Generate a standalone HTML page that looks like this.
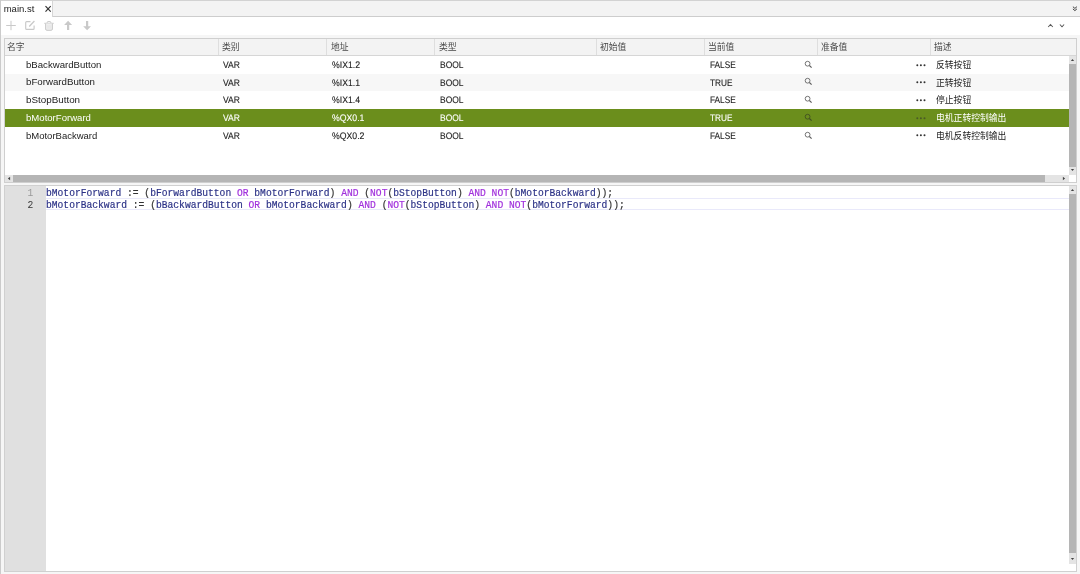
<!DOCTYPE html><html lang="zh"><head><meta charset="utf-8"><title>main.st</title><style>
*{box-sizing:border-box;margin:0;padding:0}
html,body{width:1080px;height:574px;overflow:hidden;background:#f6f6f6;}
body{position:relative;font-family:"Liberation Sans","Noto Sans CJK SC",sans-serif;color:#222;font-size:9.5px;}
#root{position:absolute;left:0;top:0;width:1080px;height:574px;will-change:transform;}
.abs{position:absolute}
.zh{font-size:8.8px;}
.t{position:absolute;white-space:nowrap;line-height:12px;height:12px;transform-origin:0 50%;}
#tabbar{left:0;top:0;width:1080px;height:17px;background:#f3f3f3;border-top:1px solid #d2d2d2;border-bottom:1px solid #cdcdcd;}
#tab{left:1px;top:1px;width:52px;height:16px;background:#fff;border-right:1px solid #d6d6d6;}
#leftedge{left:0;top:0;width:1px;height:574px;background:#cbcbcb;}
#toolbar{left:1px;top:17px;width:1079px;height:17.5px;background:#fff;}
#tablebox{left:4px;top:38px;width:1073px;height:145px;background:#fff;border:1px solid #cfcfcf;}
#thead{left:5px;top:39px;width:1071px;height:17px;background:#f3f3f3;border-bottom:1px solid #d6d6d6;}
.sep{position:absolute;top:39px;width:1px;height:16px;background:#dedede;}
.row{position:absolute;left:5px;width:1064px;}
.alt{background:#f7f7f7}
.sel{background:#6b8e1c;}
.sel .t{color:#fff}
.sb{background:#e4e4e4}
.th{background:#b5b5b5}
#editor{left:4px;top:185px;width:1073px;height:387px;background:#fff;border:1px solid #d0d0d0;}
#gutter{left:5px;top:186px;width:41px;height:385px;background:#e0e0e0;}
.code{position:absolute;left:45.5px;white-space:pre;font-family:"Liberation Mono",monospace;font-size:11px;line-height:12px;height:12px;color:#333;transform:scaleX(0.8765);transform-origin:0 50%;-webkit-text-stroke:0.2px currentColor;}
.id{color:#2c3287}
.kw{color:#a030dc}
.ln{position:absolute;width:33.2px;left:0;text-align:right;font-family:"Liberation Mono",monospace;font-size:11px;line-height:12px;transform:scaleX(0.8765);transform-origin:100% 50%;}
</style></head><body><div id="root">
<div class="abs" id="toolbar"></div>
<div class="abs" id="tabbar"></div>
<div class="abs" id="tab"></div>
<div class="abs" id="leftedge"></div>
<div class="t" style="left:3.7px;top:3px;font-size:9.5px;color:#222">main.st</div>
<svg class="abs" style="left:44px;top:4px" width="8" height="10" viewBox="0 0 8 10"><path d="M1.5 2.1 L6.7 7.7 M6.7 2.1 L1.5 7.7" stroke="#333" stroke-width="1.15" fill="none"/></svg>
<svg class="abs" style="left:1072px;top:6px" width="6" height="6" viewBox="0 0 6 6"><path d="M0.9 0.7 L2.9 2.4 L4.9 0.7 M0.9 2.9 L2.9 4.6 L4.9 2.9" stroke="#333" stroke-width="0.95" fill="none"/></svg>
<svg class="abs" style="left:0;top:17px" width="100" height="17" viewBox="0 17 100 17"><path d="M11 20.8 V30.2 M6.2 25.5 H15.8" stroke="#c9c9c9" stroke-width="1" fill="none"/><path d="M30.5 21.6 H26.7 Q25.7 21.6 25.7 22.6 V28.4 Q25.7 29.4 26.7 29.4 H33.1 Q34.1 29.4 34.1 28.4 V25.6" stroke="#c9c9c9" stroke-width="1.15" fill="none"/><path d="M29.2 26.5 L34.4 21" stroke="#c9c9c9" stroke-width="1.25" fill="none"/><path d="M44.3 23.3 H53.7 M47.2 23 V22.4 Q47.2 21.6 48 21.6 H50 Q50.8 21.6 50.8 22.4 V23" stroke="#c9c9c9" stroke-width="1" fill="none"/><path d="M45.6 23.6 V29 Q45.6 30.3 46.9 30.3 H51.1 Q52.4 30.3 52.4 29 V23.6" stroke="#c9c9c9" stroke-width="1" fill="#eeeeee"/><path d="M48 25.3 V28.6 M50 25.3 V28.6" stroke="#e0e0e0" stroke-width="0.8" fill="none"/><path d="M68.1 20.8 L72.1 25 H69.2 V30 H67 V25 H64.1 Z" fill="#c9c9c9"/><path d="M87.1 30.3 L91 26.2 H88.2 V21 H86 V26.2 H83.2 Z" fill="#c9c9c9"/></svg>
<svg class="abs" style="left:1047px;top:23px" width="20" height="6" viewBox="0 0 20 6"><path d="M1.2 4 L3.5 1.5 L5.8 4 M12.9 1.5 L15 3.8 L17.1 1.5" stroke="#5a5a5a" stroke-width="1.05" fill="none"/></svg>
<div class="abs" id="tablebox"></div><div class="abs" id="thead"></div>
<div class="sep" style="left:218px"></div>
<div class="sep" style="left:326px"></div>
<div class="sep" style="left:434px"></div>
<div class="sep" style="left:596px"></div>
<div class="sep" style="left:704px"></div>
<div class="sep" style="left:817px"></div>
<div class="sep" style="left:930px"></div>
<div class="t zh" style="left:7px;top:41px;color:#484848">名字</div>
<div class="t zh" style="left:222px;top:41px;color:#484848">类别</div>
<div class="t zh" style="left:331px;top:41px;color:#484848">地址</div>
<div class="t zh" style="left:439px;top:41px;color:#484848">类型</div>
<div class="t zh" style="left:600px;top:41px;color:#484848">初始值</div>
<div class="t zh" style="left:708px;top:41px;color:#484848">当前值</div>
<div class="t zh" style="left:821px;top:41px;color:#484848">准备值</div>
<div class="t zh" style="left:934px;top:41px;color:#484848">描述</div>
<div class="row" style="top:56px;height:18px">
<span class="t" style="left:21px;top:3.0px;transform:scaleX(1.012)">bBackwardButton</span>
<span class="t" style="left:218px;top:3.1px;-webkit-text-stroke:0.12px currentColor;transform:scale(0.900,1.0) rotate(0.03deg)">VAR</span>
<span class="t" style="left:326.5px;top:3.1px;-webkit-text-stroke:0.12px currentColor;transform:scale(0.917,1.0) rotate(0.03deg)">%IX1.2</span>
<span class="t" style="left:435px;top:3.1px;-webkit-text-stroke:0.12px currentColor;transform:scale(0.890,1.0) rotate(0.03deg)">BOOL</span>
<span class="t" style="left:704.5px;top:3.1px;-webkit-text-stroke:0.12px currentColor;transform:scale(0.870,1.0) rotate(0.03deg)">FALSE</span>
<span class="t zh" style="left:931px;top:3.1px">反转按钮</span>
<svg class="abs" style="left:798.5px;top:4.0px" width="9" height="9" viewBox="0 0 9 9"><circle cx="3.6" cy="3.7" r="2.4" stroke="#5c5c5c" stroke-width="0.85" fill="none"/><path d="M5.4 5.5 L7.6 7.7" stroke="#5c5c5c" stroke-width="1.1"/></svg>
<svg class="abs" style="left:911.3px;top:7.6px" width="11" height="3" viewBox="0 0 11 3"><circle cx="1.3" cy="1.3" r="1" fill="#333"/><circle cx="4.9" cy="1.3" r="1" fill="#333"/><circle cx="8.5" cy="1.3" r="1" fill="#333"/></svg>
</div>
<div class="row alt" style="top:73.6px;height:17.1px">
<span class="t" style="left:21px;top:2.7px;transform:scaleX(1.021)">bForwardButton</span>
<span class="t" style="left:218px;top:3.4px;-webkit-text-stroke:0.12px currentColor;transform:scale(0.900,1.0) rotate(0.03deg)">VAR</span>
<span class="t" style="left:326.5px;top:3.4px;-webkit-text-stroke:0.12px currentColor;transform:scale(0.917,1.0) rotate(0.03deg)">%IX1.1</span>
<span class="t" style="left:435px;top:3.4px;-webkit-text-stroke:0.12px currentColor;transform:scale(0.890,1.0) rotate(0.03deg)">BOOL</span>
<span class="t" style="left:704.5px;top:3.4px;-webkit-text-stroke:0.12px currentColor;transform:scale(0.870,1.0) rotate(0.03deg)">TRUE</span>
<span class="t zh" style="left:931px;top:3.4px">正转按钮</span>
<svg class="abs" style="left:798.5px;top:3.7px" width="9" height="9" viewBox="0 0 9 9"><circle cx="3.6" cy="3.7" r="2.4" stroke="#5c5c5c" stroke-width="0.85" fill="none"/><path d="M5.4 5.5 L7.6 7.7" stroke="#5c5c5c" stroke-width="1.1"/></svg>
<svg class="abs" style="left:911.3px;top:7.3px" width="11" height="3" viewBox="0 0 11 3"><circle cx="1.3" cy="1.3" r="1" fill="#333"/><circle cx="4.9" cy="1.3" r="1" fill="#333"/><circle cx="8.5" cy="1.3" r="1" fill="#333"/></svg>
</div>
<div class="row" style="top:91px;height:18px">
<span class="t" style="left:21px;top:3.2px;transform:scaleX(1.034)">bStopButton</span>
<span class="t" style="left:218px;top:3.3px;-webkit-text-stroke:0.12px currentColor;transform:scale(0.900,1.0) rotate(0.03deg)">VAR</span>
<span class="t" style="left:326.5px;top:3.3px;-webkit-text-stroke:0.12px currentColor;transform:scale(0.917,1.0) rotate(0.03deg)">%IX1.4</span>
<span class="t" style="left:435px;top:3.3px;-webkit-text-stroke:0.12px currentColor;transform:scale(0.890,1.0) rotate(0.03deg)">BOOL</span>
<span class="t" style="left:704.5px;top:3.3px;-webkit-text-stroke:0.12px currentColor;transform:scale(0.870,1.0) rotate(0.03deg)">FALSE</span>
<span class="t zh" style="left:931px;top:3.3px">停止按钮</span>
<svg class="abs" style="left:798.5px;top:4.2px" width="9" height="9" viewBox="0 0 9 9"><circle cx="3.6" cy="3.7" r="2.4" stroke="#5c5c5c" stroke-width="0.85" fill="none"/><path d="M5.4 5.5 L7.6 7.7" stroke="#5c5c5c" stroke-width="1.1"/></svg>
<svg class="abs" style="left:911.3px;top:7.8px" width="11" height="3" viewBox="0 0 11 3"><circle cx="1.3" cy="1.3" r="1" fill="#333"/><circle cx="4.9" cy="1.3" r="1" fill="#333"/><circle cx="8.5" cy="1.3" r="1" fill="#333"/></svg>
</div>
<div class="row sel" style="top:109px;height:17.5px">
<span class="t" style="left:21px;top:3.0px;transform:scaleX(1.008)">bMotorForward</span>
<span class="t" style="left:218px;top:3.1px;-webkit-text-stroke:0.12px currentColor;transform:scale(0.900,1.0) rotate(0.03deg)">VAR</span>
<span class="t" style="left:326.5px;top:3.1px;-webkit-text-stroke:0.12px currentColor;transform:scale(0.917,1.0) rotate(0.03deg)">%QX0.1</span>
<span class="t" style="left:435px;top:3.1px;-webkit-text-stroke:0.12px currentColor;transform:scale(0.890,1.0) rotate(0.03deg)">BOOL</span>
<span class="t" style="left:704.5px;top:3.1px;-webkit-text-stroke:0.12px currentColor;transform:scale(0.870,1.0) rotate(0.03deg)">TRUE</span>
<span class="t zh" style="left:931px;top:3.1px">电机正转控制输出</span>
<svg class="abs" style="left:798.5px;top:4.0px" width="9" height="9" viewBox="0 0 9 9"><circle cx="3.6" cy="3.7" r="2.4" stroke="#3f4d22" stroke-width="0.85" fill="none"/><path d="M5.4 5.5 L7.6 7.7" stroke="#3f4d22" stroke-width="1.1"/></svg>
<svg class="abs" style="left:911.3px;top:7.6px" width="11" height="3" viewBox="0 0 11 3"><circle cx="1.3" cy="1.3" r="1" fill="#4a5a28"/><circle cx="4.9" cy="1.3" r="1" fill="#4a5a28"/><circle cx="8.5" cy="1.3" r="1" fill="#4a5a28"/></svg>
</div>
<div class="row" style="top:127px;height:17.5px">
<span class="t" style="left:21px;top:2.7px">bMotorBackward</span>
<span class="t" style="left:218px;top:2.8px;-webkit-text-stroke:0.12px currentColor;transform:scale(0.900,1.0) rotate(0.03deg)">VAR</span>
<span class="t" style="left:326.5px;top:2.8px;-webkit-text-stroke:0.12px currentColor;transform:scale(0.917,1.0) rotate(0.03deg)">%QX0.2</span>
<span class="t" style="left:435px;top:2.8px;-webkit-text-stroke:0.12px currentColor;transform:scale(0.890,1.0) rotate(0.03deg)">BOOL</span>
<span class="t" style="left:704.5px;top:2.8px;-webkit-text-stroke:0.12px currentColor;transform:scale(0.870,1.0) rotate(0.03deg)">FALSE</span>
<span class="t zh" style="left:931px;top:2.8px">电机反转控制输出</span>
<svg class="abs" style="left:798.5px;top:3.7px" width="9" height="9" viewBox="0 0 9 9"><circle cx="3.6" cy="3.7" r="2.4" stroke="#5c5c5c" stroke-width="0.85" fill="none"/><path d="M5.4 5.5 L7.6 7.7" stroke="#5c5c5c" stroke-width="1.1"/></svg>
<svg class="abs" style="left:911.3px;top:7.3px" width="11" height="3" viewBox="0 0 11 3"><circle cx="1.3" cy="1.3" r="1" fill="#333"/><circle cx="4.9" cy="1.3" r="1" fill="#333"/><circle cx="8.5" cy="1.3" r="1" fill="#333"/></svg>
</div>
<div class="abs sb" style="left:1069px;top:56px;width:7px;height:119px"></div><div class="abs th" style="left:1069px;top:64px;width:7px;height:102.5px"></div>
<svg class="abs" style="left:1069.8px;top:57.6px" width="5" height="4" viewBox="0 0 5 4"><path d="M0.9 2.9 L2.5 1.1 L4.1 2.9Z" fill="#444"/></svg>
<svg class="abs" style="left:1069.8px;top:167.9px" width="5" height="4" viewBox="0 0 5 4"><path d="M0.9 1.1 L2.5 2.9 L4.1 1.1Z" fill="#444"/></svg>
<div class="abs sb" style="left:5px;top:175px;width:1063.5px;height:7.3px"></div><div class="abs th" style="left:12.5px;top:175px;width:1032px;height:7.3px"></div>
<svg class="abs" style="left:6.5px;top:176.2px" width="4" height="5" viewBox="0 0 4 5"><path d="M3.1 0.8 L0.9 2.5 L3.1 4.2Z" fill="#444"/></svg>
<svg class="abs" style="left:1062px;top:176.2px" width="4" height="5" viewBox="0 0 4 5"><path d="M0.9 0.8 L3.1 2.5 L0.9 4.2Z" fill="#444"/></svg>
<div class="abs" id="editor"></div><div class="abs" id="gutter"></div>
<div class="abs" style="left:46px;top:197.6px;width:1023px;height:12.4px;border-top:1px solid #e9e9fa;border-bottom:1px solid #e9e9fa"></div>
<div class="code" style="top:187px"><span class="id">bMotorForward</span> := (<span class="id">bForwardButton</span> <span class="kw">OR</span> <span class="id">bMotorForward</span>) <span class="kw">AND</span> (<span class="kw">NOT</span>(<span class="id">bStopButton</span>) <span class="kw">AND</span> <span class="kw">NOT</span>(<span class="id">bMotorBackward</span>));</div>
<div class="code" style="top:198.7px"><span class="id">bMotorBackward</span> := (<span class="id">bBackwardButton</span> <span class="kw">OR</span> <span class="id">bMotorBackward</span>) <span class="kw">AND</span> (<span class="kw">NOT</span>(<span class="id">bStopButton</span>) <span class="kw">AND</span> <span class="kw">NOT</span>(<span class="id">bMotorForward</span>));</div>
<div class="ln" style="top:187px;color:#999">1</div><div class="ln" style="top:198.7px;color:#333">2</div>
<div class="abs sb" style="left:1069px;top:186px;width:7px;height:377.5px"></div>
<div class="abs th" style="left:1069px;top:194px;width:7px;height:359.3px"></div>
<svg class="abs" style="left:1069.8px;top:187.5px" width="5" height="4" viewBox="0 0 5 4"><path d="M0.9 2.9 L2.5 1.1 L4.1 2.9Z" fill="#444"/></svg>
<svg class="abs" style="left:1069.8px;top:557px" width="5" height="4" viewBox="0 0 5 4"><path d="M0.9 1.1 L2.5 2.9 L4.1 1.1Z" fill="#444"/></svg>
</div></body></html>
